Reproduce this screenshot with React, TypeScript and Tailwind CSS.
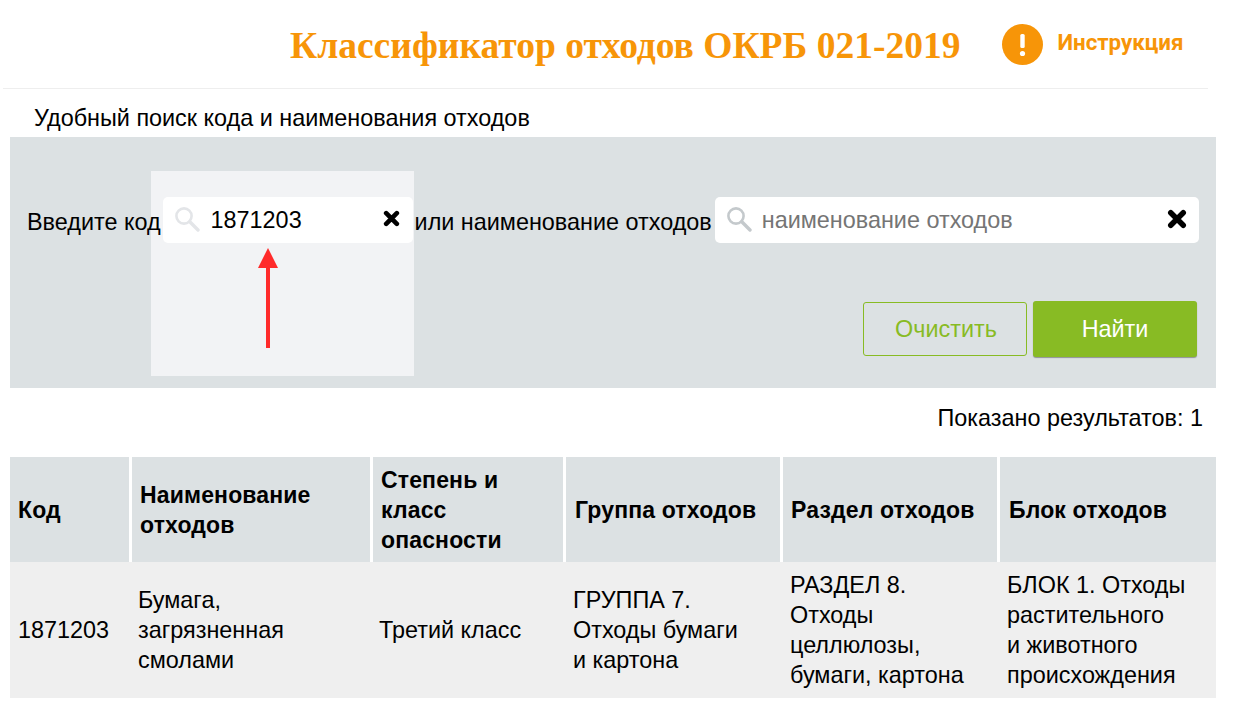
import React from 'react';

const headers = [
  { label: 'Код', cls: 'pl-[8px]' },
  { label: 'Наименование отходов', cls: 'pl-[8px]' },
  { label: 'Степень и класс опасности', cls: 'pl-[8px]' },
  { label: 'Группа отходов', cls: 'pl-[9px]' },
  { label: 'Раздел отходов', cls: 'pl-[8px]' },
  { label: 'Блок отходов', cls: 'pl-[9px]' },
];

const cells = [
  { lines: ['1871203'], cls: 'pl-[8px]' },
  { lines: ['Бумага,', 'загрязненная', 'смолами'], cls: 'pl-[6px]' },
  { lines: ['Третий класс'], cls: 'pl-[6px]' },
  { lines: ['ГРУППА 7.', 'Отходы бумаги', 'и картона'], cls: 'pl-[7px]' },
  { lines: ['РАЗДЕЛ 8.', 'Отходы', 'целлюлозы,', 'бумаги, картона'], cls: 'pl-[7px]' },
  { lines: ['БЛОК 1. Отходы', 'растительного', 'и животного', 'происхождения'], cls: 'pl-[7px]' },
];

function SearchIcon({ className }: { className: string }) {
  return (
    <svg viewBox="0 0 26 26" className={className} fill="none">
      <circle cx="10" cy="10" r="7.6" strokeWidth="2.6" stroke="currentColor" />
      <path d="M15.8 15.8 L24 24" strokeWidth="3.4" strokeLinecap="round" stroke="currentColor" />
    </svg>
  );
}

function ClearIcon({ className }: { className: string }) {
  return (
    <svg viewBox="0 0 16 16" className={className} fill="none">
      <path d="M3 3 L13 13 M13 3 L3 13" strokeWidth="4.4" strokeLinecap="round" stroke="#000" />
    </svg>
  );
}

function SearchBox({ width, value, placeholder, iconColor, textPad, clearPad, clearSize }: {
  width: string;
  value?: string;
  placeholder?: string;
  iconColor: string;
  textPad: string;
  clearPad: string;
  clearSize: string;
}) {
  return (
    <div className={`relative flex h-[46px] items-center rounded-[5px] bg-white pl-[11px] ${width} ${clearPad}`}>
      <SearchIcon className={`mb-[3px] h-[26px] w-[26px] shrink-0 ${iconColor}`} />
      <input
        readOnly
        value={value ?? ''}
        placeholder={placeholder}
        className={`mb-[1px] min-w-0 flex-1 bg-transparent text-[23.4px] text-black outline-none placeholder:text-[#757575] ${textPad}`}
      />
      <ClearIcon className={`mb-[3px] shrink-0 ${clearSize}`} />
    </div>
  );
}

export default function App() {
  return (
    <div className="min-h-[719px] bg-white font-['Liberation_Sans',Arial,sans-serif] text-[23.4px] leading-[30px] text-black">
      {/* Шапка */}
      <header className="ml-[3px] flex h-[89px] w-[1205px] items-center border-b border-[#eeeeee] pl-[287px]">
        <h1 className="mt-[4px] font-['Liberation_Serif',serif] text-[37.5px] font-bold leading-none text-[#f79508]">
          Классификатор отходов ОКРБ 021-2019
        </h1>
        <div className="ml-[42px] flex items-center">
          <svg viewBox="0 0 41 41" className="h-[41px] w-[41px]">
            <circle cx="20.5" cy="20.5" r="20.5" fill="#f79508" />
            <rect x="18.3" y="10" width="4.4" height="14" rx="1.6" fill="#fff" />
            <circle cx="20.5" cy="29.5" r="2.6" fill="#fff" />
          </svg>
          <a className="mb-[4px] ml-[14px] font-['Roboto',sans-serif] text-[22.3px] font-bold text-[#f79508]">Инструкция</a>
        </div>
      </header>

      <p className="ml-[34px] mt-[14px] h-[34px]">Удобный поиск кода и наименования отходов</p>

      {/* Панель поиска */}
      <section className="relative ml-[10px] h-[251px] w-[1206px] bg-[#dce1e3] pl-[17px] pt-[60px]">
        <div className="absolute left-[141px] top-[34px] h-[205px] w-[263px] bg-[#f2f3f5]" />
        <div className="relative flex items-center">
          <span className="mt-[3px]">Введите код</span>
          <div className="ml-[2px]">
            <SearchBox
              width="w-[250px]"
              value="1871203"
              iconColor="text-[#e3e5e8]"
              textPad="pl-[11px]"
              clearPad="pr-[13px]"
              clearSize="h-[17px] w-[17px]"
            />
          </div>
          <span className="ml-[2px] mt-[3px]">или наименование отходов</span>
          <div className="ml-[3px]">
            <SearchBox
              width="w-[484px]"
              placeholder="наименование отходов"
              iconColor="text-[#c4c9cc]"
              textPad="pl-[10px]"
              clearPad="pr-[12px]"
              clearSize="h-[20px] w-[20px]"
            />
          </div>
        </div>
        <svg viewBox="0 0 20 100" className="absolute left-[248px] top-[111px] h-[100px] w-[20px]">
          <path d="M10 0 L20 20 L0 20 Z" fill="#ff2a2a" />
          <rect x="8" y="20" width="4" height="80" fill="#ff2a2a" />
        </svg>
        <div className="relative mt-[58px] flex items-center justify-end gap-[6px] pr-[19px]">
          <button className="h-[54px] w-[164px] rounded-[3px] border border-[#88bb24] pl-[2px] text-[#88bb24]">Очистить</button>
          <button className="h-[56px] w-[164px] rounded-[3px] bg-[#88bb24] text-white shadow-[0_1px_1px_rgba(0,0,0,0.35)]">Найти</button>
        </div>
      </section>

      <p className="mr-[33px] mt-[15px] h-[54px] text-right">Показано результатов: 1</p>

      {/* Таблица результатов */}
      <div className="ml-[10px] w-[1206px]">
        <div className="grid h-[105px] grid-cols-[119px_238px_190px_214px_214px_216px] gap-x-[3px]">
          {headers.map((h) => (
            <div key={h.label} className={`flex items-center bg-[#dce1e3] pr-[6px] text-[23px] font-bold tracking-[0.15px] ${h.cls}`}>
              <span>{h.label}</span>
            </div>
          ))}
        </div>
        <div className="grid h-[136px] grid-cols-[119px_238px_190px_214px_214px_216px] gap-x-[3px] bg-[#efefef]">
          {cells.map((c) => (
            <div key={c.lines[0]} className={`flex flex-col justify-center ${c.cls}`}>
              {c.lines.map((line) => (
                <span key={line}>{line}</span>
              ))}
            </div>
          ))}
        </div>
      </div>
    </div>
  );
}
